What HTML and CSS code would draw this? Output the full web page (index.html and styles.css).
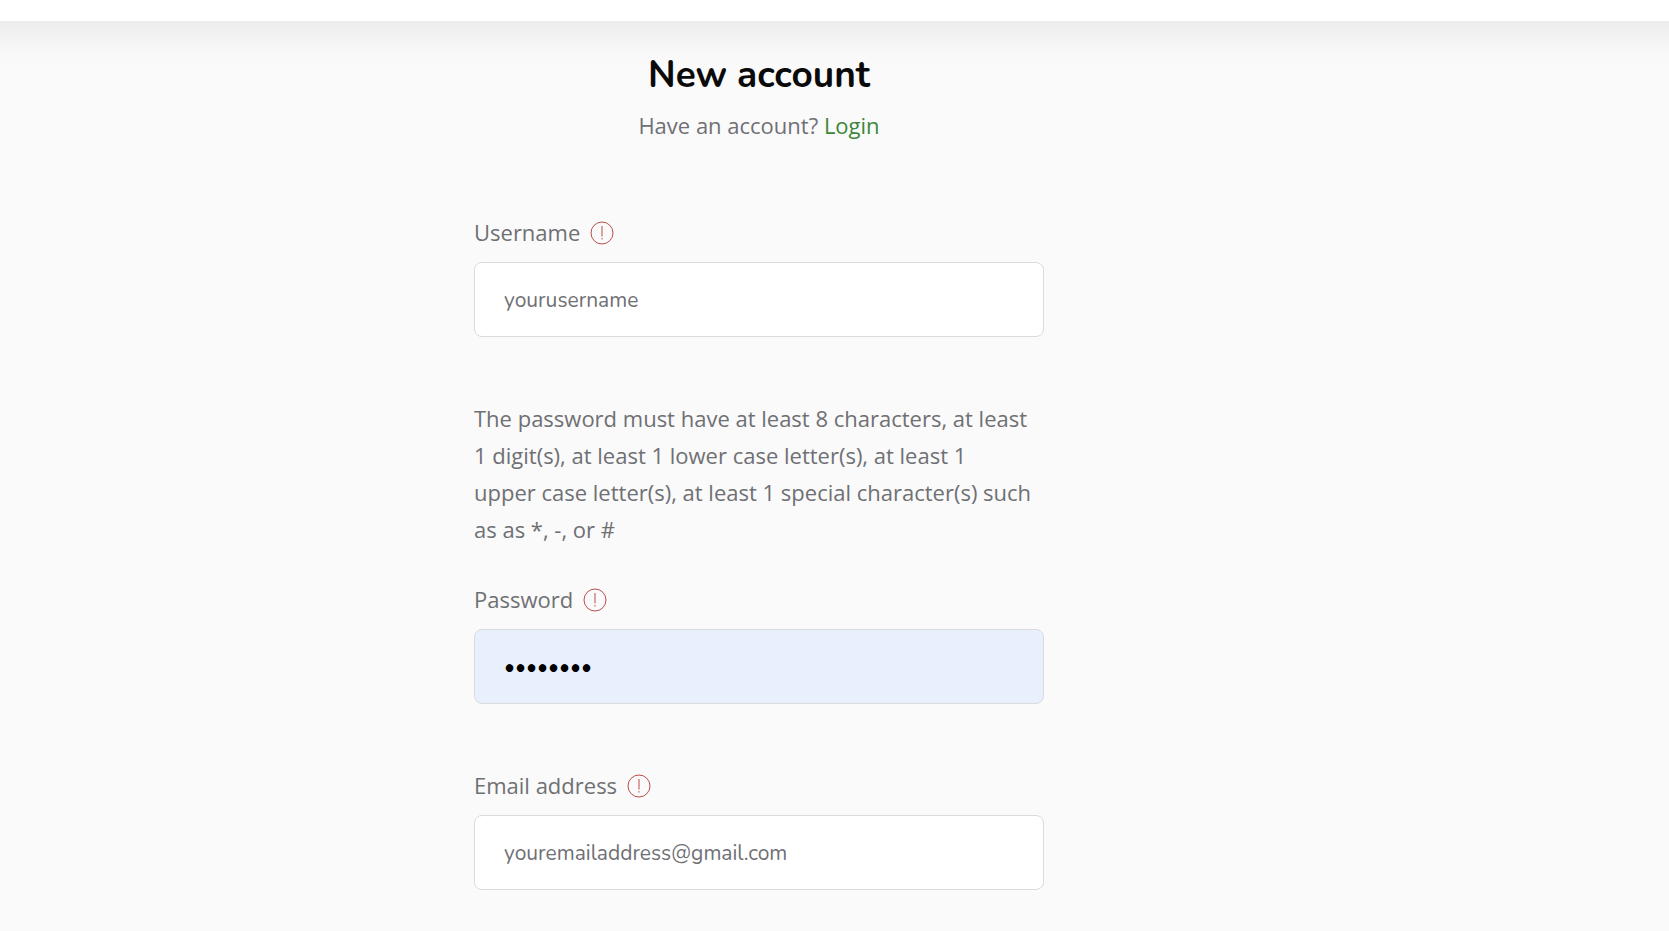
FILE: index.html
```html
<!DOCTYPE html>
<html lang="en">
<head>
    <meta charset="UTF-8">
    <meta name="viewport" content="width=device-width, initial-scale=1.0">
    <title>New account</title>

    <link rel="stylesheet" href="styles.css">
</head>
<body>
<svg class="sprite" aria-hidden="true">
    <symbol id="required" viewBox="0 0 24 24">
        <circle cx="12" cy="12" r="11" fill="none" stroke="currentColor" stroke-width="1"/>
        <path d="M12 5v10.500M12 17v1.500" fill="none" stroke="currentColor" stroke-width="1"/>
    </symbol>
</svg>

<header class="topbar"></header>

<main class="page">
    <div class="signup">
        <div class="heading">
            <h1>New account</h1>
            <p>Have an account? <a href="#login">Login</a></p>
        </div>

        <form>
            <div class="field">
                <label for="username">Username <svg class="req"><use href="#required"/></svg></label>
                <input type="text" id="username" placeholder="yourusername">
            </div>

            <p class="rules">The password must have at least 8 characters, at least<br>
                1 digit(s), at least 1 lower case letter(s), at least 1<br>
                upper case letter(s), at least 1 special character(s) such<br>
                as as *, -, or #</p>

            <div class="field">
                <label for="password">Password <svg class="req"><use href="#required"/></svg></label>
                <input type="password" id="password" class="filled" value="password">
            </div>

            <div class="field">
                <label for="email">Email address <svg class="req"><use href="#required"/></svg></label>
                <input type="email" id="email" placeholder="youremailaddress@gmail.com">
            </div>
        </form>
    </div>
</main>
</body>
</html>
```
FILE: styles.css
```css
* { box-sizing: border-box; }
body { margin: 0; background: #fafafa; color: #6f7074; font-family: "Open Sans", sans-serif; font-size: 22px; line-height: 37px; }
h1, p { margin: 0; }
a { color: #3c8739; text-decoration: none; }
.sprite { display: none; }

.topbar { height: 21px; background: #fff; }
.page { padding: 29px 151px 0 0; background: linear-gradient(#ececec, #f4f4f4 20px, #f9f9f9 34px, #fafafa 50px); }
.signup { max-width: 570px; margin: 0 auto; }

.heading { text-align: center; margin-bottom: 70px; }
.heading h1 { margin-bottom: 7px; color: #0a0a0a; font-family: Nunito, Lato, sans-serif; font-size: 37px; font-weight: 700; line-height: 50px; }

.field { margin-bottom: 63px; }
.field label { display: flex; align-items: center; gap: 10px; margin-bottom: 11px; }
.field input { display: block; width: 100%; height: 75px; padding: 0 29px; border: 1px solid #dadbdd; border-radius: 8px; background: #fff; color: #000; font-family: Nunito, Lato, sans-serif; font-size: 21px; outline: 0; }
.field input::placeholder { color: #6f7074; opacity: 1; }
.field input.filled { background: #e8f0fe; }
.field:last-child { margin-bottom: 40px; }
.req { width: 24px; height: 24px; color: #bb4d4a; }

.rules { margin-bottom: 33px; }
```
